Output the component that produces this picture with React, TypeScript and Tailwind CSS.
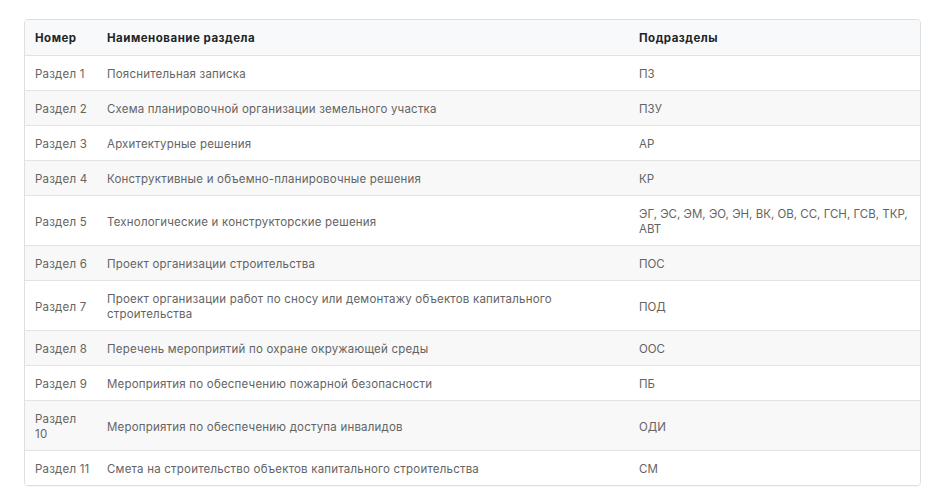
import React from "react";

const rows: { n: React.ReactNode; name: React.ReactNode; sub: React.ReactNode }[] = [
  { n: "Раздел 1", name: "Пояснительная записка", sub: "ПЗ" },
  { n: "Раздел 2", name: "Схема планировочной организации земельного участка", sub: "ПЗУ" },
  { n: "Раздел 3", name: "Архитектурные решения", sub: "АР" },
  { n: "Раздел 4", name: "Конструктивные и объемно-планировочные решения", sub: "КР" },
  {
    n: "Раздел 5",
    name: "Технологические и конструкторские решения",
    sub: (
      <>
        ЭГ, ЭС, ЭМ, ЭО, ЭН, ВК, ОВ, СС, ГСН, ГСВ, ТКР,
        <br />
        АВТ
      </>
    ),
  },
  { n: "Раздел 6", name: "Проект организации строительства", sub: "ПОС" },
  {
    n: "Раздел 7",
    name: (
      <>
        Проект организации работ по сносу или демонтажу объектов капитального
        <br />
        строительства
      </>
    ),
    sub: "ПОД",
  },
  { n: "Раздел 8", name: "Перечень мероприятий по охране окружающей среды", sub: "ООС" },
  { n: "Раздел 9", name: "Мероприятия по обеспечению пожарной безопасности", sub: "ПБ" },
  {
    n: (
      <>
        Раздел
        <br />
        10
      </>
    ),
    name: "Мероприятия по обеспечению доступа инвалидов",
    sub: "ОДИ",
  },
  { n: "Раздел 11", name: "Смета на строительство объектов капитального строительства", sub: "СМ" },
];

export default function App() {
  return (
    <div className="w-[938px] h-[496px] bg-white pt-[19px] pl-[24px]" style={{ fontFamily: "Inter, 'Noto Sans', sans-serif" }}>
      <div className="w-[897px] border border-[#dedfe1] rounded-[4px] overflow-hidden shadow-[0_1px_1px_rgba(0,0,0,0.04)]">
        <table className="w-full table-fixed border-collapse text-[11.5px] leading-[15px] tracking-[0.2px]">
          <colgroup>
            <col className="w-[72px]" />
            <col className="w-[532px]" />
            <col />
          </colgroup>
          <thead>
            <tr className="bg-[#f8f9fa] text-[#212529]">
              <th className="text-left font-bold px-[10px] pt-[11px] pb-[9px] border-b border-[#dfe2e6] whitespace-nowrap tracking-[0.5px]">Номер</th>
              <th className="text-left font-bold px-[10px] pt-[11px] pb-[9px] border-b border-[#dfe2e6] tracking-[0.5px]">Наименование раздела</th>
              <th className="text-left font-bold px-[10px] pt-[11px] pb-[9px] border-b border-[#dfe2e6] tracking-[0.5px]">Подразделы</th>
            </tr>
          </thead>
          <tbody className="text-[#646464]">
            {rows.map((r, i) => (
              <tr key={i} className={`${i % 2 === 1 ? "bg-[#f8f8f8]" : "bg-white"} ${i < rows.length - 1 ? "border-b border-[#e3e3e3]" : ""}`}>
                <td className="px-[10px] pt-[11px] pb-[8px] align-middle whitespace-nowrap">{r.n}</td>
                <td className="px-[10px] pt-[11px] pb-[8px] align-middle whitespace-nowrap">{r.name}</td>
                <td className="px-[10px] pt-[11px] pb-[8px] align-middle whitespace-nowrap tracking-normal">{r.sub}</td>
              </tr>
            ))}
          </tbody>
        </table>
      </div>
    </div>
  );
}
